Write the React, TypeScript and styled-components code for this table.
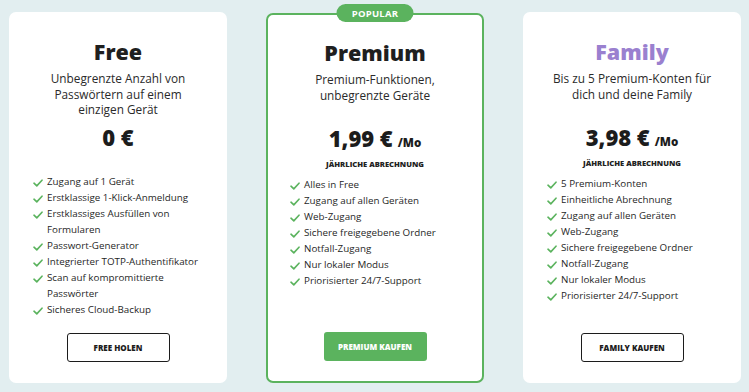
import React from "react";
import styled, { createGlobalStyle } from "styled-components";

type Plan = {
  name: string;
  accent?: string;
  description: string;
  price: string;
  perMonth?: boolean;
  features: string[];
  cta: string;
  popular?: boolean;
};

const plans: Plan[] = [
  {
    name: "Free",
    description: "Unbegrenzte Anzahl von Passwörtern auf einem einzigen\u00a0Gerät",
    price: "0 €",
    features: [
      "Zugang auf 1 Gerät",
      "Erstklassige 1-Klick-Anmeldung",
      "Erstklassiges Ausfüllen von Formularen",
      "Passwort-Generator",
      "Integrierter TOTP-Authentifikator",
      "Scan auf kompromittierte Passwörter",
      "Sicheres Cloud-Backup",
    ],
    cta: "FREE HOLEN",
  },
  {
    name: "Premium",
    description: "Premium-Funktionen, unbegrenzte Geräte",
    price: "1,99 €",
    perMonth: true,
    features: [
      "Alles in Free",
      "Zugang auf allen Geräten",
      "Web-Zugang",
      "Sichere freigegebene Ordner",
      "Notfall-Zugang",
      "Nur lokaler Modus",
      "Priorisierter 24/7-Support",
    ],
    cta: "PREMIUM KAUFEN",
    popular: true,
  },
  {
    name: "Family",
    accent: "#9a80cf",
    description: "Bis zu 5 Premium-Konten für dich und deine Family",
    price: "3,98 €",
    perMonth: true,
    features: [
      "5 Premium-Konten",
      "Einheitliche Abrechnung",
      "Zugang auf allen Geräten",
      "Web-Zugang",
      "Sichere freigegebene Ordner",
      "Notfall-Zugang",
      "Nur lokaler Modus",
      "Priorisierter 24/7-Support",
    ],
    cta: "FAMILY KAUFEN",
  },
];

const GREEN = "#5bb35e";

const GlobalStyle = createGlobalStyle`
  html, body {
    margin: 0;
    padding: 0;
    background: #e2eef0;
  }
  body {
    font-family: "Open Sans", "Noto Sans", sans-serif;
    color: #222;
  }
`;

const Check = () => (
  <svg width="10" height="8" viewBox="0 0 10 8" fill="none">
    <path d="M1 4.2 L3.8 6.9 L9 1.2" stroke={GREEN} strokeWidth="1.6" strokeLinecap="round" strokeLinejoin="round" />
  </svg>
);

const App = () => {
  return (
    <>
      <GlobalStyle />
      <Page>
        {plans.map((plan) => (
          <Card key={plan.name} $popular={plan.popular}>
            {plan.popular && <Badge>POPULAR</Badge>}
            <Title $color={plan.accent}>{plan.name}</Title>
            <Description>{plan.description}</Description>
            <PriceBlock $withBilling={plan.perMonth}>
              <Price>
                {plan.price}
                {plan.perMonth && <PerMonth>/Mo</PerMonth>}
              </Price>
              {plan.perMonth && <Billing>JÄHRLICHE ABRECHNUNG</Billing>}
            </PriceBlock>
            <Features>
              {plan.features.map((f) => (
                <Feature key={f}>
                  <CheckBox>
                    <Check />
                  </CheckBox>
                  <span>{f}</span>
                </Feature>
              ))}
            </Features>
            <Button $filled={plan.popular}>{plan.cta}</Button>
          </Card>
        ))}
      </Page>
    </>
  );
};

const Page = styled.div`
  display: grid;
  grid-template-columns: repeat(3, 218px);
  column-gap: 39px;
  padding: 12px 9px 9px 9px;
  height: 392px;
  box-sizing: border-box;
`;

const Card = styled.div<{ $popular?: boolean }>`
  position: relative;
  display: flex;
  flex-direction: column;
  align-items: center;
  background: #fff;
  border-radius: 7px;
  box-sizing: border-box;
  height: 371px;
  padding: ${(p) => (p.$popular ? "24px 18px 20px 22px" : "26px 20px 21px 24px")};
  border: ${(p) => (p.$popular ? `2px solid ${GREEN}` : "none")};
  ${(p) => p.$popular && "margin-top: 1px; height: 370px;"}
`;

const Badge = styled.div`
  position: absolute;
  top: -11px;
  left: 50%;
  transform: translateX(-50%);
  width: 77px;
  height: 18px;
  border-radius: 9px;
  background: ${GREEN};
  color: #fff;
  font-size: 9.5px;
  font-weight: 700;
  display: flex;
  align-items: center;
  justify-content: center;
  letter-spacing: 0.2px;
`;

const Title = styled.h2<{ $color?: string }>`
  margin: 0 4px 0 0;
  font-size: 21.5px;
  line-height: 28px;
  font-weight: 800;
  color: ${(p) => p.$color ?? "#1f1f1f"};
`;

const Description = styled.p`
  margin: 5px 4px 0 0;
  max-width: 162px;
  height: 48px;
  font-size: 11.8px;
  line-height: 15.5px;
  text-align: center;
  color: #2a2a2a;
`;

const PriceBlock = styled.div<{ $withBilling?: boolean }>`
  margin: 4px 4px 0 0;
  height: ${(p) => (p.$withBilling ? "53px" : "51px")};
  display: flex;
  flex-direction: column;
  align-items: center;
`;

const Price = styled.div`
  font-size: 22px;
  line-height: 28px;
  font-weight: 800;
  color: #1c1c1c;
  display: flex;
  align-items: baseline;
`;

const PerMonth = styled.span`
  font-size: 11.5px;
  font-weight: 800;
  margin-left: 5px;
`;

const Billing = styled.div`
  margin-top: 2px;
  font-size: 7.6px;
  line-height: 10px;
  font-weight: 800;
  color: #222;
`;

const Features = styled.ul`
  list-style: none;
  margin: 0;
  padding: 0;
  align-self: stretch;
  display: flex;
  flex-direction: column;
`;

const Feature = styled.li`
  display: flex;
  align-items: flex-start;
  font-size: 9.8px;
  line-height: 16px;
  color: #1f1f1f;
`;

const CheckBox = styled.span`
  flex: none;
  width: 14px;
  height: 16px;
  display: flex;
  align-items: center;
  padding-top: 2px;
  box-sizing: border-box;
`;

const Button = styled.button<{ $filled?: boolean }>`
  margin: auto 4px 0 0;
  width: 103px;
  height: 29px;
  border-radius: 3px;
  box-sizing: border-box;
  font-family: inherit;
  font-size: 8px;
  font-weight: 800;
  cursor: pointer;
  color: ${(p) => (p.$filled ? "#fff" : "#1c1c1c")};
  background: ${(p) => (p.$filled ? GREEN : "#fff")};
  border: ${(p) => (p.$filled ? "none" : "1.5px solid #1c1c1c")};
`;

export default App;
